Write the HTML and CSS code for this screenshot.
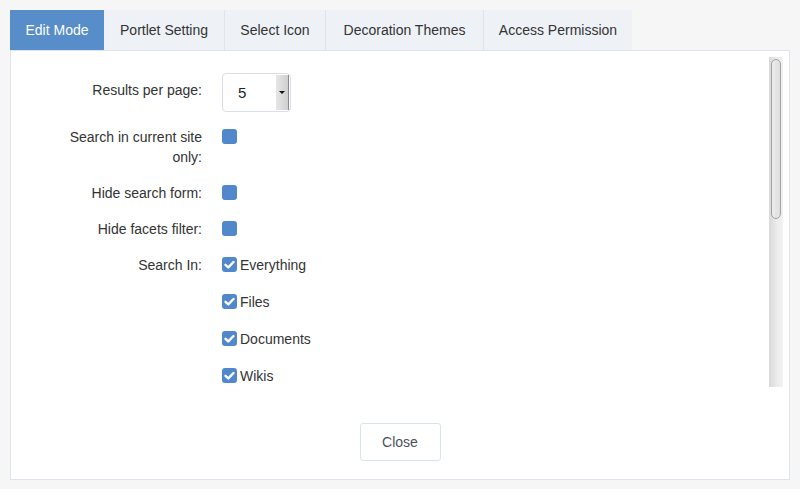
FILE: index.html
```html
<!DOCTYPE html>
<html>
<head>
<meta charset="utf-8">
<link rel="stylesheet" href="styles.css">
</head>
<body>
<div class="tabs">
  <div class="tab tab-edit active">Edit Mode</div>
  <div class="tab tab-portlet">Portlet Setting</div>
  <div class="tab tab-icon sep">Select Icon</div>
  <div class="tab tab-deco sep">Decoration Themes</div>
  <div class="tab tab-access sep">Access Permission</div>
</div>
<div class="panel">
  <div class="scroll">
    <div class="content">
      <div class="row row-select">
        <div class="label label-select">Results per page:</div>
        <div class="select">
          <span class="select-value">5</span>
          <span class="select-arrow"><span class="caret"></span></span>
        </div>
      </div>
      <div class="row">
        <div class="label">Search in current site only:</div>
        <span class="box"></span>
      </div>
      <div class="row">
        <div class="label">Hide search form:</div>
        <span class="box"></span>
      </div>
      <div class="row">
        <div class="label">Hide facets filter:</div>
        <span class="box"></span>
      </div>
      <div class="row">
        <div class="label">Search In:</div>
        <div class="options">
          <div class="option"><span class="box"><svg viewBox="0 0 15 15" width="15" height="15"><polyline points="3.5,7.8 6.3,10.4 11.5,5" fill="none" stroke="#fff" stroke-width="2.4" stroke-linecap="round" stroke-linejoin="round"/></svg></span>Everything</div>
          <div class="option"><span class="box"><svg viewBox="0 0 15 15" width="15" height="15"><polyline points="3.5,7.8 6.3,10.4 11.5,5" fill="none" stroke="#fff" stroke-width="2.4" stroke-linecap="round" stroke-linejoin="round"/></svg></span>Files</div>
          <div class="option"><span class="box"><svg viewBox="0 0 15 15" width="15" height="15"><polyline points="3.5,7.8 6.3,10.4 11.5,5" fill="none" stroke="#fff" stroke-width="2.4" stroke-linecap="round" stroke-linejoin="round"/></svg></span>Documents</div>
          <div class="option"><span class="box"><svg viewBox="0 0 15 15" width="15" height="15"><polyline points="3.5,7.8 6.3,10.4 11.5,5" fill="none" stroke="#fff" stroke-width="2.4" stroke-linecap="round" stroke-linejoin="round"/></svg></span>Wikis</div>
        </div>
      </div>
    </div>
    <div class="scrollbar"><div class="thumb"></div></div>
  </div>
  <div class="footer">
    <button class="btn">Close</button>
  </div>
</div>
</body>
</html>
```
FILE: styles.css
```css
html, body {
  margin: 0;
  padding: 0;
}
body {
  background: #f6f6f6;
  padding: 10px;
  font-family: "Liberation Sans", Arial, sans-serif;
  font-size: 14px;
  color: #333;
  height: 489px;
  box-sizing: border-box;
  overflow: hidden;
}
.tabs {
  display: flex;
  height: 40px;
}
.tab {
  background: #eef2f6;
  line-height: 40px;
  text-align: center;
  color: #333;
  white-space: nowrap;
  flex: none;
}
.tab-edit { width: 94px; }
.tab-portlet { width: 120px; }
.tab-icon { width: 100px; }
.tab-deco { width: 157px; }
.tab-access { width: 148px; }
.tab.sep {
  border-left: 1px solid #dde4ec;
}
.tab.active {
  background: #578dc9;
  color: #fff;
}
.panel {
  background: #fff;
  border: 1px solid #dde4ec;
  height: 430px;
  box-sizing: border-box;
  padding: 6px 6px 0 6px;
}
.scroll {
  display: flex;
  height: 330px;
}
.content {
  flex: 1;
  overflow: hidden;
  padding-top: 16px;
}
.row {
  display: flex;
  gap: 20px;
  align-items: flex-start;
  margin-bottom: 16px;
}
.row-select {
  margin-bottom: 15px;
}
.label {
  width: 150px;
  margin-left: 35px;
  flex: none;
  text-align: right;
  line-height: 20px;
}
.label-select {
  padding-top: 7px;
}
.select {
  width: 69px;
  height: 39px;
  box-sizing: border-box;
  border: 1px solid #d8dfe6;
  border-radius: 4px;
  display: flex;
  align-items: stretch;
}
.select-value {
  flex: 1;
  padding-left: 15px;
  line-height: 37px;
  font-size: 15px;
  color: #222;
}
.select-arrow {
  width: 12px;
  margin: 1px 1px 1px 0;
  background: linear-gradient(to right, #e6e6e6, #cfcfcf);
  border-right: 1px solid #8a8a8a;
  display: flex;
  align-items: center;
  justify-content: center;
}
.caret {
  width: 0;
  height: 0;
  border-left: 3px solid transparent;
  border-right: 3px solid transparent;
  border-top: 3px solid #111;
}
.box {
  flex: none;
  width: 15px;
  height: 15px;
  border-radius: 3px;
  background: #5088cb;
  margin-top: 2px;
  display: block;
}
.box svg {
  display: block;
}
.options {
  display: flex;
  flex-direction: column;
  gap: 17px;
}
.option {
  display: flex;
  align-items: flex-start;
  gap: 3px;
  line-height: 20px;
}
.option .box {
  margin-top: 2px;
}
.scrollbar {
  width: 14px;
  flex: none;
  background: linear-gradient(to right, #d9d9d9, #ececec 60%, #f2f2f2);
  padding: 2px 2px 0 2px;
  box-sizing: border-box;
}
.thumb {
  height: 160px;
  border: 1px solid #a2a2a2;
  border-radius: 6px;
  background: linear-gradient(to right, #ececec, #dedede);
  box-sizing: border-box;
}
.footer {
  display: flex;
  justify-content: center;
  padding-top: 36px;
}
.btn {
  width: 81px;
  height: 38px;
  background: #fff;
  border: 1px solid #dbe3ea;
  border-radius: 3px;
  font-family: "Liberation Sans", Arial, sans-serif;
  font-size: 14px;
  color: #4a525c;
  padding: 0;
}
```
